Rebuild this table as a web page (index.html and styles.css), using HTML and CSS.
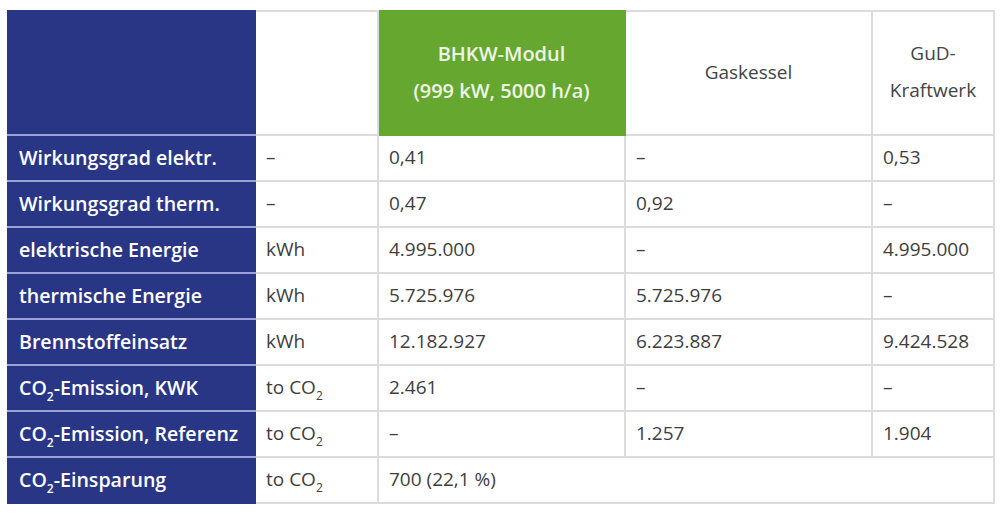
FILE: index.html
```html
<!DOCTYPE html>
<html lang="de">
<head>
<meta charset="utf-8">
<link rel="stylesheet" href="styles.css">
</head>
<body>
<table class="cmp">
  <colgroup>
    <col class="c1"><col class="c2"><col class="c3"><col class="c4"><col class="c5">
  </colgroup>
  <thead>
    <tr>
      <th class="lab"></th>
      <th class="head"></th>
      <th class="head green">BHKW-Modul<br>(999 kW, 5000 h/a)</th>
      <th class="head">Gaskessel</th>
      <th class="head">GuD-<br>Kraftwerk</th>
    </tr>
  </thead>
  <tbody>
    <tr><th class="lab">Wirkungsgrad elektr.</th><td>–</td><td>0,41</td><td>–</td><td>0,53</td></tr>
    <tr><th class="lab">Wirkungsgrad therm.</th><td>–</td><td>0,47</td><td>0,92</td><td>–</td></tr>
    <tr><th class="lab">elektrische Energie</th><td>kWh</td><td>4.995.000</td><td>–</td><td>4.995.000</td></tr>
    <tr><th class="lab">thermische Energie</th><td>kWh</td><td>5.725.976</td><td>5.725.976</td><td>–</td></tr>
    <tr><th class="lab">Brennstoffeinsatz</th><td>kWh</td><td>12.182.927</td><td>6.223.887</td><td>9.424.528</td></tr>
    <tr><th class="lab">CO<sub>2</sub>-Emission, KWK</th><td>to CO<sub>2</sub></td><td>2.461</td><td>–</td><td>–</td></tr>
    <tr><th class="lab">CO<sub>2</sub>-Emission, Referenz</th><td>to CO<sub>2</sub></td><td>–</td><td>1.257</td><td>1.904</td></tr>
    <tr><th class="lab">CO<sub>2</sub>-Einsparung</th><td>to CO<sub>2</sub></td><td colspan="3">700 (22,1 %)</td></tr>
  </tbody>
</table>
</body>
</html>
```

FILE: styles.css
```css
html, body {
  margin: 0;
  background: #ffffff;
}
body {
  padding: 10px 0 0 7px;
  font-family: "Open Sans", "Liberation Sans", sans-serif;
}
.cmp {
  border-collapse: collapse;
  table-layout: fixed;
  width: 986px;
}
.c1 { width: 247px; }
.c2 { width: 123px; }
.c3 { width: 247px; }
.c4 { width: 247px; }
.c5 { width: 122px; }

.cmp th, .cmp td {
  border: 2px solid #dcdcdc;
  padding: 0 10px 2px;
  height: 42px;
  text-align: left;
  vertical-align: middle;
  font-size: 19px;
  color: #3e3e3e;
  font-weight: 400;
}
.cmp thead th {
  height: 120px;
  padding-bottom: 2px;
  line-height: 37px;
  text-align: center;
}
.cmp .lab {
  background: #293685;
  color: #ffffff;
  font-weight: 600;
  font-size: 19.6px;
  border-color: #9aa3d6;
  border-left-color: #293685;
  border-right-color: #293685;
}
.cmp thead .lab {
  border-top-color: #293685;
}
.cmp tbody tr:last-child .lab {
  border-bottom-color: #293685;
}
.cmp .head {
  color: #444444;
  font-weight: 400;
}
.cmp .green {
  background: #66a82f;
  color: #eef5e6;
  font-weight: 600;
  font-size: 20px;
  border-color: #66a82f;
}
sub {
  font-size: 12px;
  vertical-align: -6px;
  line-height: 0;
}
```
